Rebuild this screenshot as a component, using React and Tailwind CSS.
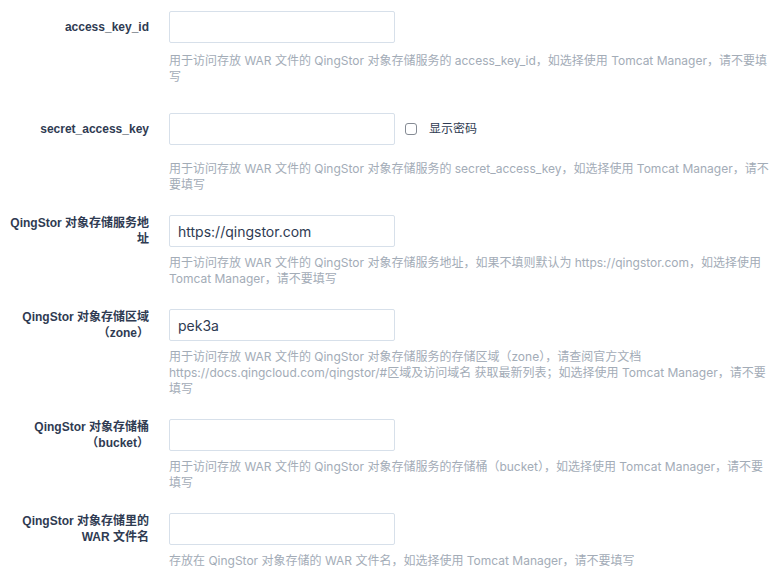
import { useState } from "react";

// help text is split into lines the way the original page wraps them
const fields = [
  {
    label: "access_key_id",
    value: "",
    help: [
      "用于访问存放 WAR 文件的 QingStor 对象存储服务的 access_key_id，如选择使用 Tomcat Manager，请不要填",
      "写",
    ],
  },
  {
    label: "secret_access_key",
    value: "",
    secret: true,
    help: [
      "用于访问存放 WAR 文件的 QingStor 对象存储服务的 secret_access_key，如选择使用 Tomcat Manager，请不",
      "要填写",
    ],
  },
  {
    label: "QingStor 对象存储服务地址",
    value: "https://qingstor.com",
    help: [
      "用于访问存放 WAR 文件的 QingStor 对象存储服务地址，如果不填则默认为 https://qingstor.com，如选择使用",
      "Tomcat Manager，请不要填写",
    ],
  },
  {
    label: "QingStor 对象存储区域（zone）",
    value: "pek3a",
    help: [
      "用于访问存放 WAR 文件的 QingStor 对象存储服务的存储区域（zone），请查阅官方文档",
      "https://docs.qingcloud.com/qingstor/#区域及访问域名 获取最新列表；如选择使用 Tomcat Manager，请不要",
      "填写",
    ],
  },
  {
    label: "QingStor 对象存储桶（bucket）",
    value: "",
    help: [
      "用于访问存放 WAR 文件的 QingStor 对象存储服务的存储桶（bucket），如选择使用 Tomcat Manager，请不要",
      "填写",
    ],
  },
  {
    label: "QingStor 对象存储里的 WAR 文件名",
    value: "",
    help: ["存放在 QingStor 对象存储的 WAR 文件名，如选择使用 Tomcat Manager，请不要填写"],
  },
];

function Field({ field, first }) {
  const [value, setValue] = useState(field.value);
  const [show, setShow] = useState(false);

  return (
    <div className={`flex gap-5 ${first ? "mb-[28px]" : "mb-[22px]"}`}>
      {/* LABEL */}
      <div className="w-[149px] shrink-0 h-8 flex items-center justify-end text-right text-xs leading-4 font-bold text-[#2f3b52]">
        {field.label}
      </div>

      {/* CONTROL + HELP */}
      <div className="w-[606px]">
        <div className="flex items-center">
          <input
            type={field.secret && !show ? "password" : "text"}
            value={value}
            onChange={(e) => setValue(e.target.value)}
            className="w-[226px] h-8 px-2 border border-[#d7e0ea] rounded-[2px] text-sm text-[#2f3b52] outline-none font-['Inter','Noto_Sans_CJK_SC',sans-serif]"
          />
          {field.secret && (
            <label className="ml-[10px] flex items-center gap-3 text-xs text-[#2f3b52] cursor-pointer">
              <input
                type="checkbox"
                checked={show}
                onChange={() => setShow(!show)}
                className="appearance-none size-3 border border-[#858b94] rounded-[3px] bg-white"
              />
              显示密码
            </label>
          )}
        </div>
        <p
          className={`${first ? "mt-[10px]" : field.secret ? "mt-4" : "mt-2"} text-xs leading-4 text-[#a3acb7] whitespace-nowrap font-['Inter','Noto_Sans_CJK_SC',sans-serif]`}
        >
          {field.help.map((line) => (
            <span key={line} className="block">
              {line}
            </span>
          ))}
        </p>
      </div>
    </div>
  );
}

export default function App() {
  return (
    <div className="w-[783px] h-[582px] overflow-hidden bg-white pt-[11px] font-['Liberation_Sans','Noto_Sans_CJK_SC',sans-serif]">
      {fields.map((f, i) => (
        <Field key={f.label} field={f} first={i === 0} />
      ))}
    </div>
  );
}
